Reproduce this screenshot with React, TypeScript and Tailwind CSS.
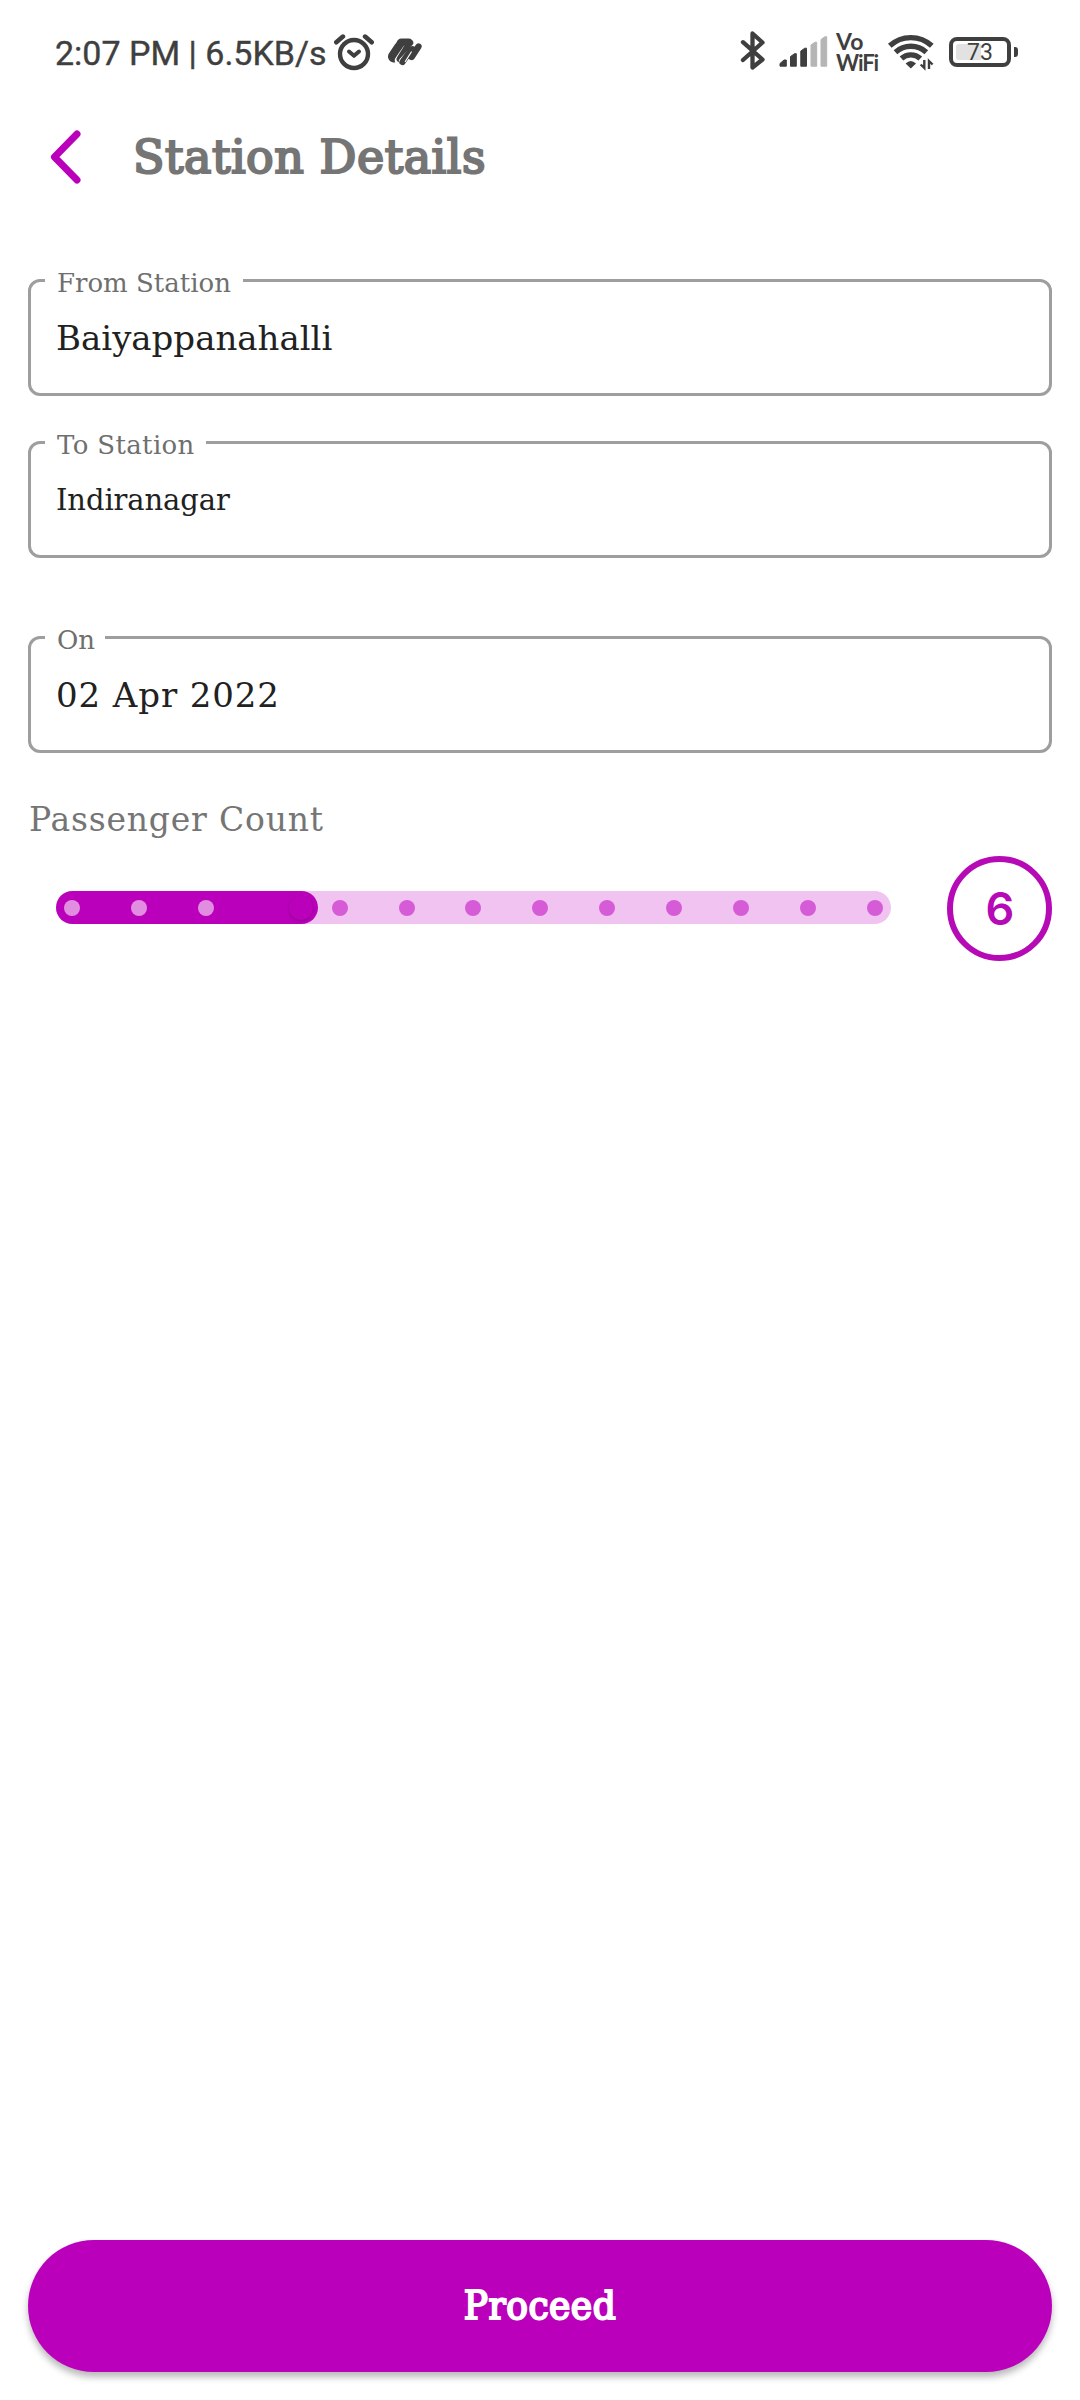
import type { ReactNode } from "react";
import { clsx } from "clsx";

const STEPS = 13;
const VISIBLE_ACTIVE = 3;

function AlarmIcon() {
  return (
    <svg className="ml-[7px] shrink-0" width="40" height="42" viewBox="334 32 40 42" fill="none" stroke="#3f3f3f" strokeWidth="4.4" strokeLinecap="round" strokeLinejoin="round">
      <circle cx="354" cy="54" r="14" />
      <path d="M349 51.5l5 4.3 5-4.3" strokeWidth="4" />
      <path d="M336.3 42.200l6.600-5.600M371.700 42.200l-6.600-5.600" strokeWidth="4.600" />
    </svg>
  );
}

function BrandIcon() {
  return (
    <svg className="ml-3 shrink-0" width="38" height="42" viewBox="386 32 38 42" fill="none" strokeLinecap="round" strokeLinejoin="round">
      <path d="M394 56.500L400 47.500" stroke="#3f3f3f" strokeWidth="12" />
      <path d="M401.500 43.500L408.500 43.500" stroke="#3f3f3f" strokeWidth="10" />
      <path d="M406.500 49.500L399 60.500" stroke="#fff" strokeWidth="8.600" />
      <path d="M408 46L400 59" stroke="#3f3f3f" strokeWidth="6.800" />
      <path d="M403 61.500L418 45" stroke="#fff" strokeWidth="8.500" />
      <path d="M402.500 62L410.800 50.300Q413.500 47.500 412.800 51.500L411.700 57L418.500 46.500" stroke="#3f3f3f" strokeWidth="6.300" />
      <path d="M405.300 61.500L411.300 52" stroke="#fff" strokeWidth="1.200" />
    </svg>
  );
}

function BluetoothIcon() {
  return (
    <svg className="shrink-0" width="28" height="42" viewBox="740 32 28 42" fill="none" stroke="#3f3f3f" strokeWidth="4.300" strokeLinecap="round" strokeLinejoin="round">
      <path d="M743 43.200L762.500 60.500L752.500 68.500V34.500L762.500 43.500L743 61" />
    </svg>
  );
}

function SignalIcon() {
  return (
    <svg className="ml-2.5 shrink-0" width="50" height="42" viewBox="778 32 50 42">
      <g fill="#3f3f3f" stroke="#3f3f3f" strokeWidth="1" strokeLinejoin="round">
        <path d="M780 64.500l4-3.500h2.300v6.200h-6.300z" />
        <path d="M790.500 57.500l4-2.800h1.800v12.500h-5.800z" />
        <path d="M800.800 52l4-2.800h1.700v18h-5.700z" />
      </g>
      <g fill="#b5b5b5" stroke="#b5b5b5" strokeWidth="1" strokeLinejoin="round">
        <path d="M811 46l4-2.800h1.700v24h-5.700z" />
        <path d="M821 40.500l4-2.800h1.700v29.500h-5.700z" />
      </g>
    </svg>
  );
}

function WifiIcon() {
  return (
    <svg className="ml-1.5 shrink-0" width="50" height="42" viewBox="886 32 50 42" fill="none" stroke="#3f3f3f" strokeWidth="5.400">
      <path d="M889.800 46.800A31 31 0 0 1 931.800 46.800" />
      <path d="M895.500 53.200A23 23 0 0 1 926.300 53.200" />
      <path d="M901.500 59.500A14 14 0 0 1 920.300 59.500" />
      <path d="M905.600 64.500q5.200-5 10.400 0l-5.200 5z" fill="#3f3f3f" stroke="none" />
      <path d="M924.300 61v8l-3.600-3.500M929 70v-8l3.600 3.500" strokeWidth="2.400" />
    </svg>
  );
}

function Battery() {
  return (
    <div className="ml-[13px] flex shrink-0 items-center gap-[3px]">
      <div className="relative flex h-[30px] w-[62px] items-center justify-center rounded-[8px] border-[4.500px] border-[#3f3f3f]">
        <div className="absolute left-[3px] top-[3px] h-4 w-[25px] rounded-l-[3px] bg-[#e2e2e2]" />
        <span className="relative mt-0.5 font-['Roboto'] text-[23px] leading-5 text-[#3f3f3f]">73</span>
      </div>
      <div className="h-2.5 w-1 rounded-r-[3px] bg-[#3f3f3f]" />
    </div>
  );
}

function StatusBar() {
  return (
    <header className="flex h-[106px] items-start justify-between pl-[55px] pr-[62px] pt-8 text-[#3f3f3f]">
      <div className="flex items-start">
        <span className="mt-[1px] w-[272px] whitespace-nowrap font-['Roboto'] text-[34px] leading-10 [-webkit-text-stroke:0.4px_#3f3f3f]">2:07 PM | 6.5KB/s</span>
        <AlarmIcon />
        <BrandIcon />
      </div>
      <div className="flex h-10 items-center">
        <BluetoothIcon />
        <SignalIcon />
        <div className="ml-2 flex w-11 flex-col font-['Lato'] text-[23px] font-bold leading-[21px]">
          <span>Vo</span>
          <span className="whitespace-nowrap text-[22px] tracking-[-1.1px]">WiFi</span>
        </div>
        <WifiIcon />
        <Battery />
      </div>
    </header>
  );
}

function Field({ label, labelWidth, className, children }: { label: string; labelWidth: string; className?: string; children: ReactNode }) {
  return (
    <div className={clsx("relative h-[117px] rounded-[12px] border-[3px] border-[#9e9e9e] pl-[25px] pt-9 text-[#212121]", className)}>
      <span className={clsx("absolute left-[14px] top-[-14px] whitespace-nowrap bg-white pl-[12px] text-[26px] leading-[30px] text-[#6f6f6f]", labelWidth)}>{label}</span>
      {children}
    </div>
  );
}

function Slider() {
  return (
    <div className="relative -top-px flex h-[33px] w-[835px] items-center justify-between rounded-full bg-[#f0c3f0] px-2">
      <div className="absolute left-0 top-0 flex h-[33px] w-[262px] items-center justify-end rounded-full bg-[#bb00bb] pr-[5px]">
        <div className="size-6 rounded-full bg-[#bb00bb] shadow-[0_1px_3px_rgba(70,0,70,0.45)]" />
      </div>
      {Array.from({ length: STEPS }, (_, i) => (
        <span
          key={i}
          className={clsx("relative size-4 rounded-full", i < VISIBLE_ACTIVE ? "bg-[#e18ee1]" : "bg-[#d65bd6]", i === VISIBLE_ACTIVE && "invisible")}
        />
      ))}
    </div>
  );
}

export default function App() {
  return (
    <div className="flex h-[2400px] w-[1080px] flex-col bg-white font-['DejaVu_Serif',serif]">
      <StatusBar />
      <div className="flex h-[102px] items-center pl-[46px]">
        <svg width="40" height="60" viewBox="46 127 40 60" fill="none" stroke="#bb00bb" strokeWidth="7" strokeLinecap="round" strokeLinejoin="round">
          <path d="M77 134L54.500 157l22.500 23" />
        </svg>
        <h1 className="ml-[47px] text-[46px] font-normal leading-[60px] tracking-[0.5px] text-[#757575] [-webkit-text-stroke:2.2px_#757575]">Station Details</h1>
      </div>
      <main className="flex flex-1 flex-col px-7 pb-7 pt-[71px]">
        <Field label="From Station" labelWidth="w-[198px]">
          <p className="text-[34px] leading-10">Baiyappanahalli</p>
        </Field>
        <Field label="To Station" labelWidth="w-[161px] tracking-[0.35px]" className="mt-[45px]">
          <p className="text-[29px] leading-10 tracking-[-0.1px]">Indiranagar</p>
        </Field>
        <Field label="On" labelWidth="w-[60px]" className="mt-[78px]">
          <p className="text-[34px] leading-10 tracking-[0.9px]">02 Apr 2022</p>
        </Field>
        <p className="mt-[47px] pl-px text-[33px] leading-10 tracking-[0.8px] text-[#757575]">Passenger Count</p>
        <div className="mt-4 flex items-center justify-between pl-7">
          <Slider />
          <div className="flex size-[105px] items-center justify-center rounded-full border-[6px] border-[#b50ab5] pl-px font-['Inter'] text-[45px] font-semibold leading-none text-[#b50ab5]">6</div>
        </div>
        <button className="mt-auto flex h-[132px] items-center justify-center rounded-full bg-[#bb00bb] pb-[2px] font-['DejaVu_Serif_Condensed','DejaVu_Serif',serif] text-[40px] font-normal tracking-[0.5px] text-white shadow-[0_5px_7px_rgba(0,0,0,0.28)] [-webkit-text-stroke:2px_#ffffff]">
          Proceed
        </button>
      </main>
    </div>
  );
}
